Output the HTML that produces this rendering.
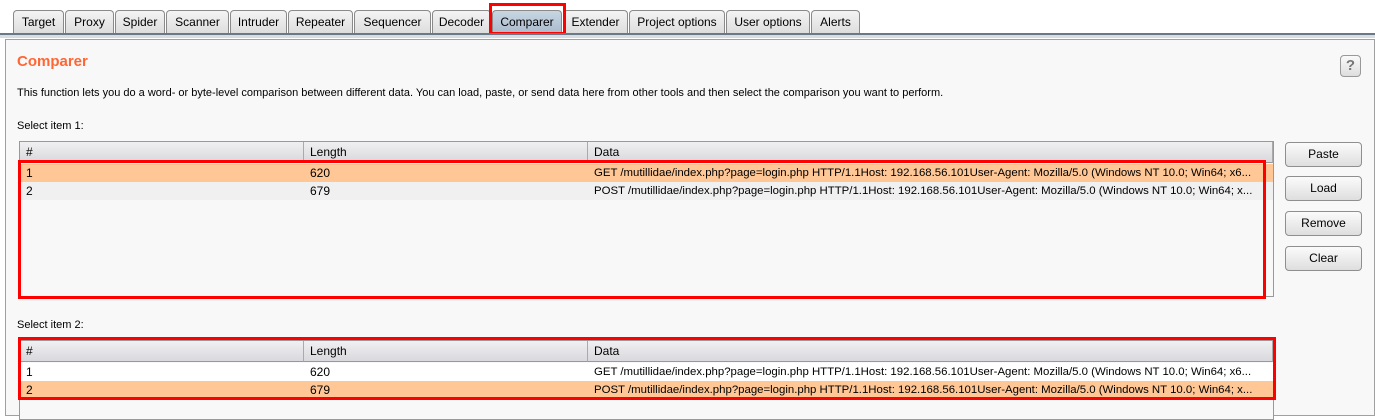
<!DOCTYPE html><html><head><style>
*{margin:0;padding:0;box-sizing:border-box}
body{width:1375px;height:416px;overflow:hidden;background:#fff;font-family:"Liberation Sans",Arial,sans-serif;font-size:12px;color:#000;position:relative}
.a{position:absolute}
.tab{position:absolute;top:10px;height:24px;border:1px solid #8a8a8a;border-bottom:none;border-radius:4px 4px 0 0;background:linear-gradient(#f4f4f4,#dcdcdc);text-align:center;line-height:23px}
.tab.sel{background:linear-gradient(#c8d6e3,#a9bacb)}
.th{position:absolute;height:21px;background:linear-gradient(#f0f0f2,#d9d9de);border-bottom:1px solid #999;border-right:1px solid #aaa;line-height:21px;padding-left:6px}
.row{position:absolute;height:18px;line-height:18px;overflow:hidden;white-space:nowrap}
.row span{position:absolute;top:0;white-space:nowrap}
.row span.d{font-size:11.4px;width:674px;overflow:hidden}
.btn{position:absolute;left:1285px;width:77px;height:25px;border:1px solid #8f8f8f;border-radius:4px;background:linear-gradient(#fbfbfb,#dedede);text-align:center;line-height:23px}
.red{position:absolute;border:3px solid #f00}
</style></head><body>
<div class="tab" style="left:13px;width:51px">Target</div>
<div class="tab" style="left:65px;width:49px">Proxy</div>
<div class="tab" style="left:115px;width:50px">Spider</div>
<div class="tab" style="left:166px;width:63px">Scanner</div>
<div class="tab" style="left:230px;width:57px">Intruder</div>
<div class="tab" style="left:288px;width:65px">Repeater</div>
<div class="tab" style="left:354px;width:77px">Sequencer</div>
<div class="tab" style="left:432px;width:59px">Decoder</div>
<div class="tab sel" style="left:492px;width:70px">Comparer</div>
<div class="tab" style="left:563px;width:65px">Extender</div>
<div class="tab" style="left:629px;width:96px">Project options</div>
<div class="tab" style="left:726px;width:84px">User options</div>
<div class="tab" style="left:811px;width:49px">Alerts</div>
<div class="red" style="left:489px;top:3px;width:77px;height:32px"></div>
<div class="a" style="left:0;top:33px;width:1375px;height:2px;background:#6b7888"></div>
<div class="a" style="left:0;top:35px;width:1375px;height:3px;background:#d8dde3"></div>
<div class="a" style="left:5px;top:39px;width:1370px;height:377px;background:#f8f8f8;border:1px solid #a0a0a0"></div>
<div class="a" style="left:17px;top:53px;font-size:15px;font-weight:bold;color:#ff6633">Comparer</div>
<div class="a" style="left:1340px;top:55px;width:21px;height:22px;border:1px solid #999;border-radius:4px;background:linear-gradient(#fafafa,#dedede);text-align:center;font-weight:bold;font-size:15px;line-height:20px;color:#777">?</div>
<div class="a" style="left:17px;top:87px;font-size:11px">This function lets you do a word- or byte-level comparison between different data. You can load, paste, or send data here from other tools and then select the comparison you want to perform.</div>
<div class="a" style="left:17px;top:120px;font-size:11px">Select item 1:</div>
<div class="a" style="left:19px;top:141px;width:1255px;height:156px;background:#f8f8f8;border:1px solid #999"></div>
<div class="th" style="left:20px;top:142px;width:284px">#</div>
<div class="th" style="left:304px;top:142px;width:284px">Length</div>
<div class="th" style="left:588px;top:142px;width:685px">Data</div>
<div class="row" style="left:20px;top:164px;width:1253px;background:#ffc796"><span style="left:6px">1</span><span style="left:290px">620</span><span class="d" style="left:574px">GET /mutillidae/index.php?page=login.php HTTP/1.1Host: 192.168.56.101User-Agent: Mozilla/5.0 (Windows NT 10.0; Win64; x6...</span></div>
<div class="row" style="left:20px;top:182px;width:1253px;background:#f0f0f0"><span style="left:6px">2</span><span style="left:290px">679</span><span class="d" style="left:574px">POST /mutillidae/index.php?page=login.php HTTP/1.1Host: 192.168.56.101User-Agent: Mozilla/5.0 (Windows NT 10.0; Win64; x...</span></div>
<div class="btn" style="top:142px">Paste</div>
<div class="btn" style="top:176px">Load</div>
<div class="btn" style="top:211px">Remove</div>
<div class="btn" style="top:246px">Clear</div>
<div class="a" style="left:17px;top:319px;font-size:11px">Select item 2:</div>
<div class="a" style="left:19px;top:340px;width:1255px;height:80px;background:#f8f8f8;border:1px solid #999"></div>
<div class="th" style="left:20px;top:341px;width:284px">#</div>
<div class="th" style="left:304px;top:341px;width:284px">Length</div>
<div class="th" style="left:588px;top:341px;width:685px">Data</div>
<div class="row" style="left:20px;top:363px;width:1253px;background:#fff"><span style="left:6px">1</span><span style="left:290px">620</span><span class="d" style="left:574px">GET /mutillidae/index.php?page=login.php HTTP/1.1Host: 192.168.56.101User-Agent: Mozilla/5.0 (Windows NT 10.0; Win64; x6...</span></div>
<div class="row" style="left:20px;top:381px;width:1253px;background:#ffc796"><span style="left:6px">2</span><span style="left:290px">679</span><span class="d" style="left:574px">POST /mutillidae/index.php?page=login.php HTTP/1.1Host: 192.168.56.101User-Agent: Mozilla/5.0 (Windows NT 10.0; Win64; x...</span></div>
<div class="red" style="left:18px;top:160px;width:1248px;height:139px"></div>
<div class="red" style="left:18px;top:337px;width:1258px;height:63px"></div>
</body></html>
